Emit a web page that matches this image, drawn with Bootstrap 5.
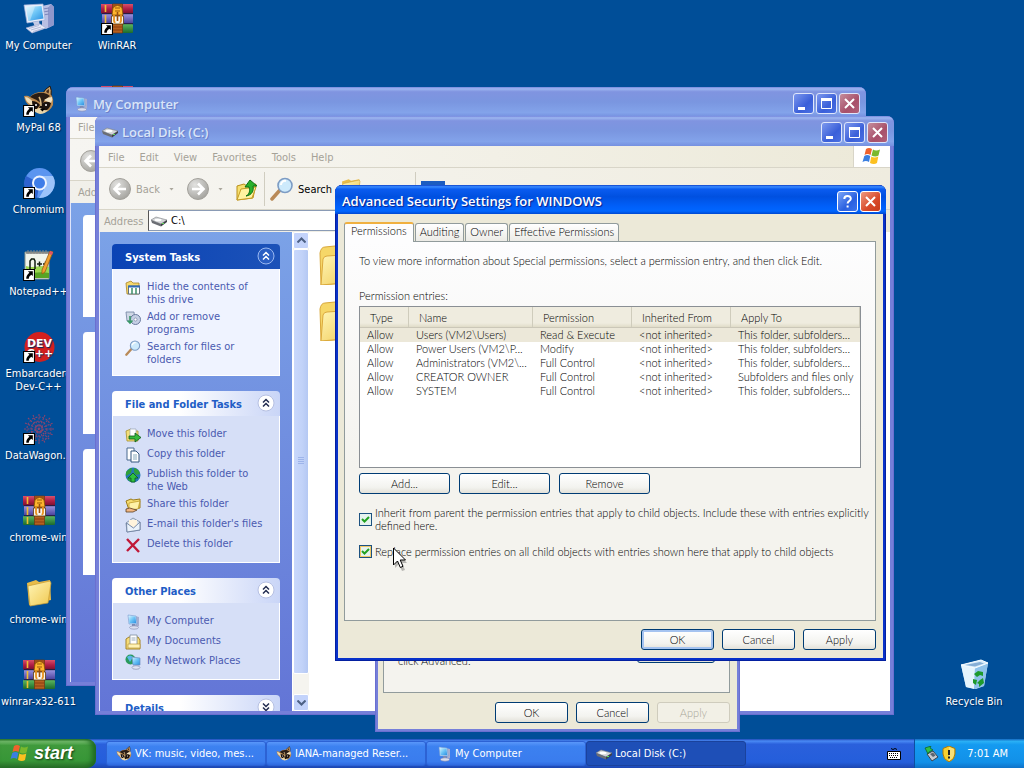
<!DOCTYPE html>
<html lang="en">
<head>
<meta charset="utf-8">
<meta name="viewport" content="width=device-width, initial-scale=1">
<title>Desktop</title>
<link rel="stylesheet" href="https://cdn.jsdelivr.net/npm/bootstrap@5.3.0/dist/css/bootstrap.min.css">
<style>
:root{--shell:"DejaVu Sans Condensed","Noto Sans",sans-serif;--dlg:Lato,"Liberation Sans",Arial,sans-serif;--cap:"Open Sans","Noto Sans",sans-serif}
body{font:11px/13px var(--shell);color:#000;background:#004e98;height:100vh;overflow:hidden}
button,input{font:inherit;color:inherit}
a,a:hover{text-decoration:none;color:inherit}
svg{display:block;flex:none}
.i16{width:16px;height:16px}.i24{width:24px;height:24px}.i32{width:32px;height:32px}

/* desktop */
.desk{display:grid;grid-template-columns:77px 80px 1fr 100px;grid-template-rows:repeat(9,82px);overflow:hidden}
.shortcut,.shortcut:hover{color:#fff;padding-top:3px;text-align:center;text-shadow:1px 1px 1px #002a5c;white-space:nowrap;display:flex;flex-direction:column;align-items:center;gap:4px}
.bin{grid-column:4;grid-row:9}

/* windows */
.win{position:absolute;border-radius:7px 7px 0 0;display:flex;flex-direction:column}
.win-back{background:#757fd9;padding:0 4px 4px;box-shadow:inset 0 0 0 1px #6a6fd0}
.caption{height:30px;font:600 13px/16px var(--cap);color:#d8e4f8;display:flex;align-items:center;margin:0 -4px;padding:3px 6px 0 7px;border-radius:7px 7px 0 0;background:linear-gradient(#7486dd 0,#9db6f0 6%,#8094e0 16%,#7a96e0 50%,#83a3ea 85%,#7590e0 100%);text-shadow:1px 1px 0 #6b7fcb}
.capbtn{width:21px;height:21px;padding:0;border:1px solid #dfe6fb;border-radius:3px;background:linear-gradient(135deg,#7d98ee,#3a5fd9 60%,#4a70e2);color:#fff}
.capbtn.x{background:linear-gradient(135deg,#c58d9c,#a8506a 60%,#b0607a)}
.capgroup{display:flex;gap:2px}
.w1{left:66px;right:158px;top:87px;bottom:53px}
.w2{left:95px;right:130px;top:116px;bottom:24px}
.chrome{background:#f1f0ea;color:#a5a298}
.menubar{height:22px;border-bottom:1px solid #d8d5c8;background:linear-gradient(90deg,#f8f7f4,#ece9d8)}
.toolrow{height:42px;border-bottom:1px solid #d8d5c8;background:linear-gradient(90deg,#f6f5f1,#efecdf);padding:2px 0 0 9px}
.addrrow{height:22px;background:linear-gradient(90deg,#f1f0ea,#ece9d8)}
.addrrow input{border:0;outline:0;background:transparent;width:100%;color:#000;padding:0}
.addrbox{background:#fff;border:1px solid #8a9bb5;border-left-color:#555;height:21px}
.vsep{width:1px;height:34px;margin:0 5px;background:#d0cdc0}
.caret{width:5px;height:3px;background:#aaa79d;clip-path:polygon(0 0,100% 0,50% 100%)}
.flagbox{width:37px;background:#fff;border-left:1px solid #d8d5c8}
.taskpane{width:193px;padding:12px 12px 0;background:linear-gradient(#7ba2e7,#6375d6);border-left:1px solid #dfe5fa;overflow:hidden;display:flex;flex-direction:column;gap:15px;flex:none}
.taskbox{flex:none;color:#4a5ab0}
.taskbox h2{font:bold 11px/13px var(--shell);height:25px;margin:0;padding:3px 5px 0 13px;border-radius:4px 4px 0 0;background:linear-gradient(90deg,#fff 40%,#c9d5f7);color:#215dc6;display:flex;align-items:center;justify-content:space-between}
.taskbox.prime h2{background:linear-gradient(90deg,#0a43b5,#1c52b8);color:#fff}
.taskbox ul{margin:0;padding:11px 12px 9px 12px;border:1px solid #fff;border-top:0;background:#d6dff7;list-style:none;display:flex;flex-direction:column;gap:4px}
.taskbox.prime ul{background:#eff3ff}
.taskbox li{display:flex;gap:6px;min-height:16px}
.chev{width:18px;height:18px;padding:0;border:0;background:none;margin-top:-4px}
.sbar{width:17px;background:#f5f4ef;flex:none;border-left:1px solid #fff}
.sbtn{height:17px;padding:0;border:1px solid #fff;border-radius:2px;background:#c3d3fb;display:flex;align-items:center;justify-content:center}
.thumb{background:linear-gradient(90deg,#c9d8fc,#c1d2f8 60%,#b4c8f3);border:1px solid #fff;border-radius:2px;display:flex;align-items:center;justify-content:center;height:425px}
.ghost{background:linear-gradient(90deg,#fff,#dfe3f6);border-left:1px solid #fff;border-radius:4px 0 0 0;border-bottom:1px solid #fff}

/* dialogs */
.dlg{font:300 11px/13px var(--dlg)}
.face{background:#ece9d8}
.sheet{background:linear-gradient(#fdfdfe,#f4f3ee 60%);border:1px solid #919b9c}
.xbtn{font:300 11px/13px var(--dlg);border:1px solid #003c74;border-radius:3px;background:linear-gradient(#fff,#f3f3ef 70%,#e3e1d9);height:21px;width:73px;padding:0;color:#000}
.xbtn.wide{width:91px}
.xbtn.def{box-shadow:inset 0 0 0 2px #a5c3f0}
.xbtn:disabled{border-color:#cfccbd;color:#a9a798;background:#f2f0e6}
.w3{left:375px;right:284px;top:420px;bottom:7px}
.w3 .face{padding:6px 7px 6px 5px}
.w4{left:335px;right:138px;top:185px;background:#0831c9;padding:0 3px 3px;box-shadow:inset 0 0 0 1px #0420a0}
.w4 .caption{margin:0 -3px;height:29px;padding:3px 5px 0 7px;color:#fff;text-shadow:1px 1px 1px #0a1e8a;background:linear-gradient(#0a3fc8 0,#3a8bff 6%,#0a5cf0 14%,#0050e0 40%,#0060fa 75%,#0066ff 90%,#0048d0)}
.w4 .capbtn{background:linear-gradient(135deg,#7aa5f8,#2a60e0 60%,#3a74ee);border-color:#fff}
.w4 .capbtn.x{background:linear-gradient(135deg,#ee9a80,#d8492a 60%,#c83c1c)}
.w4 .face{padding:8px 7px 8px 6px}
.xtabs{border:0;margin:0;gap:1px;align-items:flex-end}
.xtabs .nav-link{border:1px solid #919b9c;border-bottom:0;border-radius:3px 3px 0 0;padding:1px 4px 3px;margin:0;color:#000;background:linear-gradient(#fff,#ecebe6);line-height:13px;font-weight:300}
.xtabs .nav-link.active{background:#fdfdfe;border-color:#919b9c;border-top:2px solid #f0b040;padding:0 6px 5px;margin-bottom:-1px;position:relative;color:#000}
.w4 .sheet{padding:12px 14px 60px;min-height:380px}
.listbox{border:1px solid #8a8f94;background:#fff;height:162px}
.listbox table{width:100%;table-layout:fixed;border-collapse:separate;border-spacing:0}
.listbox th{font-weight:300;background:linear-gradient(#efecdf 80%,#e0dcc8);border-bottom:1px solid #cbc7b8;height:21px;padding:1px 0 0 10px;box-shadow:inset -1px 0 #cfccbc}
.listbox td{height:14px;line-height:14px;padding:0 0 0 7px;white-space:nowrap;overflow:hidden}
.listbox tr.sel td{background:#ece8d9}
.tick{appearance:none;width:13px;height:13px;margin:0;border:1px solid #1c5180;flex:none;background:#e6f3ee url("data:image/svg+xml,%3Csvg xmlns='http://www.w3.org/2000/svg' viewBox='0 0 11 11'%3E%3Cpath d='M2 5l2.5 2.5L9 3' fill='none' stroke='%2321a121' stroke-width='2'/%3E%3C/svg%3E")}
.tick.hot{box-shadow:inset 0 0 0 1px #f0c868}
.pointer{position:absolute;left:393px;top:547px;width:14px;height:24px}

/* taskbar */
.bar{height:29px;background:linear-gradient(#1f4bb8 0,#4a8af5 7%,#2a60dc 18%,#245edb 80%,#1c46b0);color:#fff;flex:none}
.start{width:96px;border:0;padding:0 0 2px 10px;border-radius:0 9px 9px 0;background:linear-gradient(#2c7a2a 0,#78c070 8%,#3f9a3c 22%,#379637 75%,#2a6f2a);box-shadow:inset -4px 0 5px #1f6a22;font:italic bold 18px/20px "Liberation Sans",sans-serif;color:#fff;text-shadow:1px 1px 2px #143c14}
.task{width:160px;height:25px;border:1px solid #2c62d4;border-radius:3px;background:linear-gradient(#5a97fa,#3c81f0 20%,#3a7cee 85%,#2f6ae0);color:#fff;padding:0 0 0 9px;text-align:left;white-space:nowrap;overflow:hidden}
.task.on{background:#1e4fb7;border-color:#1a429c}
.tray{width:110px;background:linear-gradient(#1568c0 0,#2ab0f5 8%,#149af0 20%,#1290e8 80%,#0f72c8);border-left:1px solid #0d4fa0}
</style>
</head>
<body class="d-flex flex-column">

<svg width="0" height="0" class="position-absolute" aria-hidden="true">
<defs>
<linearGradient id="gScr" x1="0" y1="0" x2="1" y2="1"><stop offset="0" stop-color="#d6f4ff"/><stop offset=".5" stop-color="#6cc4f6"/><stop offset="1" stop-color="#2a8ee0"/></linearGradient>
<linearGradient id="gFol" x1="0" y1="0" x2="1" y2="1"><stop offset="0" stop-color="#fff6b8"/><stop offset="1" stop-color="#f0c850"/></linearGradient>
<radialGradient id="gBall" cx=".35" cy=".3" r=".8"><stop offset="0" stop-color="#e2e2e0"/><stop offset="1" stop-color="#a09f9a"/></radialGradient>
<linearGradient id="gRed" x1="0" y1="0" x2="0" y2="1"><stop offset="0" stop-color="#d8506a"/><stop offset=".5" stop-color="#b02048"/><stop offset="1" stop-color="#7a1030"/></linearGradient>
<linearGradient id="gVio" x1="0" y1="0" x2="0" y2="1"><stop offset="0" stop-color="#9a94e0"/><stop offset="1" stop-color="#4a3f9a"/></linearGradient>
<linearGradient id="gGrn" x1="0" y1="0" x2="0" y2="1"><stop offset="0" stop-color="#5cb860"/><stop offset="1" stop-color="#1c6a2c"/></linearGradient>
<symbol id="arrow" viewBox="0 0 11 11"><path d="M.5.5h10v10H.5z" fill="#fff" stroke="#000"/><path d="M4.500 2h4.500v4.500L7.600 5.200C6 6.300 5.300 7.300 5.300 9H3C2.800 6.700 4 4.900 5.900 3.500z" fill="#000"/></symbol>
<symbol id="pc" viewBox="0 0 32 32"><path d="M19 3l9-2 3 3v18l-8 4-4-2z" fill="#b9bfe4"/><path d="M28 1l3 3v18l-6 3V5z" fill="#8f97cc"/><path d="M20 6l6-1M20 9l6-1M20 12l6-1" stroke="#7d86bb"/><path d="M1 2l19-1 2 16-18 3z" fill="#e9eefb" stroke="#9fb0d8" stroke-width=".7"/><path d="M3 4l15.500-1 2 12.500L5.500 18z" fill="url(#gScr)"/><path d="M3 4l9-.6L7 17.700l-1.500.3z" fill="#fff" opacity=".35"/><path d="M10 19l6-1 1 5-5 1z" fill="#c3cae6"/><path d="M3 25l14-4 6 4-14 5z" fill="#e8ebf8" stroke="#a7afd4" stroke-width=".7"/><path d="M6 25.500l10-3M8 27l10-3M10 28.500l10-3" stroke="#b5bcdc"/></symbol>
<symbol id="pcs" viewBox="0 0 16 16"><path d="M10 2l4 1v9l-3 2z" fill="#a7adcf"/><path d="M3 1l8 1 1 8-8 0z" fill="#cfe0f8" stroke="#6f9cd0" stroke-width=".6"/><path d="M3.700 1.700l6.800.8.700 6.800-6.700-.1z" fill="url(#gScr)"/><path d="M7 10h3l1 3H7z" fill="#7d8bb4"/><ellipse cx="9" cy="13.500" rx="4.500" ry="1.700" fill="#d9def0" stroke="#8088ac" stroke-width=".6"/></symbol>
<symbol id="rar" viewBox="0 0 32 32"><rect x="0" y="1" width="32" height="9.500" fill="url(#gRed)"/><rect x="1" y="11" width="31" height="9.500" fill="url(#gVio)"/><rect x="0" y="21" width="32" height="9" rx="1" fill="url(#gGrn)"/><path d="M4.500 2v7M4.500 12v8M4.500 22v7" stroke="#f0c030" stroke-width="1.600"/><path d="M1 10.700h31M1 20.700h31" stroke="#2a1838"/><path d="M11.500 1h10v29h-10z" fill="#b5601f" stroke="#6a3410" stroke-width=".7"/><path d="M12 24h9M12 27h9M12 3h9" stroke="#8c3f12"/><path d="M12 5q4.500-5 9 0l1 7h-11z" fill="#ffb52e" stroke="#8a5408" stroke-width=".8"/><path d="M14 5h5M14 8h5" stroke="#9a5a08" stroke-width="1.200"/><path d="M10.500 13h12v8h-12z" fill="#f8f4ec" stroke="#5c3c10" stroke-width=".8"/><path d="M13 12v6q0 1.500 1.500 1.500M20 12v6q0 1.500-1.500 1.500" fill="none" stroke="#e8921c" stroke-width="1.800"/><path d="M16.500 9v9" stroke="#9a4e10" stroke-width="1.600"/></symbol>
<symbol id="coon" viewBox="0 0 32 32"><path d="M20 8q2-4 7-7 2 4 1 10z" fill="#c8a068" stroke="#20140c"/><path d="M23 7q1-2 3-3 0 3-.5 5z" fill="#4a2c1c"/><path d="M1 11q4-1 6 1 4-5 12-5 7 0 10 4 2 4 1 9-3 7-11 8-9 0-12-7-5-3-6-10z" fill="#bb8a50"/><path d="M7 12q6-5 14-4 4 1 6 3-5 3-8 8-6-5-12-7z" fill="#2a1d15"/><path d="M2 12q3 0 5 2l7 6-2 4q-3-1-5-5-4-2-5-7z" fill="#eddcb8"/><path d="M9 16q5 0 8 4l-4 5q-4-3-4-9z" fill="#1c130e"/><path d="M21 15q4-3 8-3 1 3-1 6-4-1-7-3z" fill="#f2e4c4"/><path d="M18 19q5-4 10-1-1 6-6 8-4 0-6-3z" fill="#1c130e"/><path d="M14 24q3-2 5 0 3 2 6 1-3 4-8 4-5-1-7-5z" fill="#e8d4a8"/><path d="M16 12q2 3 2 9" stroke="#d8b880" stroke-width="1.600" fill="none"/><circle cx="13" cy="20" r="1" fill="#fff"/><circle cx="23" cy="20" r="1" fill="#fff"/><path d="M17 24l5-.5-2.500 3z" fill="#000"/></symbol>
<symbol id="crm" viewBox="0 0 32 32"><circle cx="16.500" cy="16" r="15" fill="#5b95f0"/><path d="M16.500 16L3 9A15 15 0 0 0 14 31z" fill="#2d62cf"/><path d="M16.500 9H30A15 15 0 0 1 16 31l7-12z" fill="#9cc3fa"/><circle cx="16.500" cy="16" r="7.500" fill="#eef4ff"/><circle cx="16.500" cy="16" r="5.500" fill="#3f7de8"/></symbol>
<symbol id="npp" viewBox="0 0 32 32"><path d="M2 3h24v27H2z" fill="#f0f4ec" stroke="#8a9488"/><path d="M3 17c8 3 15-2 23 1v11H3z" fill="#9cd850"/><path d="M3 23c8 2 15-1 23 1v5H3z" fill="#58a424"/><path d="M3 4h23" stroke="#555"/><path d="M5 1v4M8 1v4M11 1v4M14 1v4M17 1v4M20 1v4M23 1v4" stroke="#888"/><path d="M7 20v-8l1.500-2H11l1 2v8M14 15h5M16.500 12.500v5M20 15h5M22.500 12.500v5" fill="none" stroke="#101c10" stroke-width="1.500"/><path d="M27 2l3 1-8 20-3 2v-4z" fill="#f0a030" stroke="#9a5c10" stroke-width=".8"/><path d="M27 2l3 1-1 3-3-1z" fill="#e0566a"/></symbol>
<symbol id="dev" viewBox="0 0 32 32"><circle cx="16.500" cy="16" r="15" fill="#d2201e"/><text x="16.500" y="16" font-family="DejaVu Sans" font-weight="700" font-size="11" fill="#fff" text-anchor="middle">DEV</text><text x="17" y="26" font-family="DejaVu Sans" font-weight="700" font-size="11" fill="#fff" text-anchor="middle">C++</text></symbol>
<symbol id="dw" viewBox="0 0 32 32"><g fill="none" stroke="#a04468" stroke-width="1.100" stroke-dasharray="2 1.500" opacity=".85"><circle cx="16" cy="16" r="4"/><circle cx="16" cy="16" r="8"/><circle cx="16" cy="16" r="12"/><path d="M16 1v30M1 16h30M5 5l22 22M27 5L5 27M10 2l12 28M22 2L10 30M2 10l28 12M2 22l28-12"/></g></symbol>
<symbol id="fold" viewBox="0 0 32 32"><path d="M4 6l9-3 3 2 11-2 1 20-22 5z" fill="#e8bc48"/><path d="M5 9l22-5 1 2-3 20L7 29z" fill="url(#gFol)" stroke="#c99c34" stroke-width=".7"/></symbol>
<symbol id="bigfold" viewBox="0 0 46 40"><path d="M2 8q1-6 5-6l10-1q4 0 5 4l16 0q5 0 5 5l-4 27-36 3z" fill="#f6d768" stroke="#d9a83a"/><path d="M5 14q1-3 4-3l30-2q3 0 3 4l-5 24-34 3z" fill="url(#gFol)" stroke="#dba93c"/></symbol>
<symbol id="bin" viewBox="0 0 32 32"><path d="M3 6l20-5 7 3-4 23-8 3-10-2z" fill="#b8daf4"/><path d="M3 6l14 3-1 21-8-2z" fill="#e5f4fd"/><path d="M17 9l13-5-4 23-10 3z" fill="#8fc2ea"/><path d="M3 6l20-5 7 3-13 5z" fill="#d7ecfa" stroke="#f5fbff"/><path d="M7 6l15-3 4 1.500-9 3z" fill="#86aed6"/><path d="M16 15l4-3 5 1v4l-3-1-3 2zM25 19l1 5-5 4v-3l-2-1 3-3zM15 20l4 1-1 5-3-2z" fill="#1e9a2c"/></symbol>
<symbol id="disk" viewBox="0 0 16 16"><path d="M0 7l5-3 11 3-6 4z" fill="#d4d6d8" stroke="#7c7f84" stroke-width=".6"/><path d="M0 7l10 4v2.500L1 10z" fill="#6b6e74"/><path d="M10 11l6-4v2l-6 4.500z" fill="#3f4248"/><ellipse cx="7" cy="7" rx="3.500" ry="1.300" fill="#fff"/><rect x="11" y="10" width="2" height="1" fill="#5fe05a"/></symbol>
<symbol id="mag" viewBox="0 0 24 24"><path d="M10 13L2 22" stroke="#b98a58" stroke-width="3.500" stroke-linecap="round"/><circle cx="15" cy="8.500" r="7" fill="#cdeafc" stroke="#7d9cc4" stroke-width="1.600"/><path d="M11 8a4 4 0 0 1 5-4" stroke="#fff" stroke-width="2" fill="none"/></symbol>
<symbol id="upf" viewBox="0 0 24 24"><path d="M2 9l7-2 3 2 9-2-3 14-16 2z" fill="#f7e070" stroke="#b98f18"/><path d="M6 12l15-2-4 11-15 2z" fill="#fff3a0" stroke="#c69c24"/><path d="M11 19c4-2 4-6 3-9h-4l5-7 7 6h-4c1 5-1 9-7 10z" fill="#2bb02c" stroke="#0d6e14"/></symbol>
<symbol id="flag" viewBox="0 0 20 20"><path d="M4 3q3-2 6 0L8.500 9q-3-2-6 0z" fill="#f0622c"/><path d="M11 3.500q3 2 7 0L16.500 9.500q-3 2-7 0z" fill="#7ab82c"/><path d="M2.300 10q3-2 6 0L7 16q-3-2-6.500 0z" fill="#3a7fe0"/><path d="M9.300 10.500q3 2 7 0L15 17q-3 2-7 0z" fill="#fcc020"/></symbol>
<symbol id="tHide" viewBox="0 0 16 16"><path d="M1 3l5-2 2 2h6v11H2z" fill="#f4d86c" stroke="#a8842a" stroke-width=".8"/><path d="M3.500 6h11v8h-11z" fill="#fff" stroke="#62727e"/><path d="M3 6.500h12" stroke="#2f6bb8" stroke-width="2"/><path d="M7 8v6M11 8v6" stroke="#3d8e68" stroke-width="1.500"/></symbol>
<symbol id="tAdd" viewBox="0 0 16 16"><path d="M1 2h8l1 9H2z" fill="#cfd7e6" stroke="#7080a0" stroke-width=".8"/><circle cx="10.500" cy="9.500" r="5" fill="#c5cfe4" stroke="#6a7a9e"/><circle cx="10.500" cy="9.500" r="1.500" fill="#fff" stroke="#6a7a9e" stroke-width=".6"/><path d="M5 6v7M2.500 10.500L5 13l2.500-2.500" fill="none" stroke="#3a9868" stroke-width="1.600"/></symbol>
<symbol id="tMove" viewBox="0 0 16 16"><path d="M1 4l5-2 2 2h5v10H2z" fill="#f2df7a" stroke="#a8902c" stroke-width=".8"/><path d="M5 2h6v8H5z" fill="#fff" stroke="#8a98a8" stroke-width=".6"/><path d="M4 9h6V6l6 4.500L10 15v-3H4z" fill="#36b83c" stroke="#0e5c18" stroke-width=".8"/></symbol>
<symbol id="tCopy" viewBox="0 0 16 16"><path d="M2 1h7v12H2z" fill="#fff" stroke="#48688e"/><path d="M6 4h5l3 3v8H6z" fill="#fff" stroke="#35567e"/><path d="M8 8h4M8 10h4M8 12h4" stroke="#8ab"/></symbol>
<symbol id="tWeb" viewBox="0 0 16 16"><circle cx="8" cy="8" r="7.500" fill="#2478b4"/><path d="M1 5q4-4 6-4l-1 5-5 3zM9 1q5 1 6 6l-4 1-2-3zM2 11h4l1 4q-4-1-5-4z" fill="#2fa03a"/><path d="M8 6l5 5h-3v4H6v-4H3z" fill="#30c040" stroke="#0b5c1c" stroke-width=".8"/></symbol>
<symbol id="tShare" viewBox="0 0 16 16"><path d="M1 4l5-2 2 1 7-1v9l-11 2z" fill="#f6dc70" stroke="#9c7c1c"/><path d="M4 6l11-2-2 8-9 1z" fill="#fff2a8" stroke="#b8921c" stroke-width=".7"/><path d="M1 12q4-2 7 0l4 1-4 2H1z" fill="#f2b884" stroke="#5c3c20" stroke-width=".8"/></symbol>
<symbol id="tMail" viewBox="0 0 16 16"><path d="M1 6l7-5 7 4v8L2 15z" fill="#dbe6f2" stroke="#76869c" stroke-width=".8"/><path d="M4 3h8v7H4z" fill="#fff3dc"/><path d="M1.500 6l7 5 6.500-6v8L2 15z" fill="#eaf2fb" stroke="#6d80a0" stroke-width=".9"/></symbol>
<symbol id="tDel" viewBox="0 0 16 16"><path d="M2 2l12 13M14 2L2 14" stroke="#c01838" stroke-width="2.400"/></symbol>
<symbol id="tDocs" viewBox="0 0 16 16"><path d="M1 5l3-2h9l2 3v9H1z" fill="#f6dc78" stroke="#a58428"/><path d="M5 1h7v10H5z" fill="#fff" stroke="#7f8ea0" stroke-width=".8"/><path d="M6.500 4h4M6.500 6h4" stroke="#9ab"/><path d="M3 10h12v4H3z" fill="#fff2b4" stroke="#b8983c" stroke-width=".7"/></symbol>
<symbol id="tNet" viewBox="0 0 16 16"><circle cx="5.500" cy="5.500" r="5" fill="#2a9a5c"/><path d="M2 3q3-3 6 0l-3 5z" fill="#58b8e8"/><path d="M7 3l8 1v7l-7 0z" fill="url(#gScr)" stroke="#6f8cc0" stroke-width=".7"/><ellipse cx="11" cy="13.500" rx="4" ry="1.800" fill="#dfe4f4" stroke="#8890b0" stroke-width=".7"/></symbol>
<symbol id="up2" viewBox="0 0 18 18"><circle cx="9" cy="9" r="8" fill="#fff" stroke="#b6c0e2"/><path d="M6 8.500l3-3 3 3M6 12.500l3-3 3 3" fill="none" stroke="#222c50" stroke-width="1.500"/></symbol>
<symbol id="dn2" viewBox="0 0 18 18"><circle cx="9" cy="9" r="8" fill="#fff" stroke="#b6c0e2"/><path d="M6 5.500l3 3 3-3M6 9.500l3 3 3-3" fill="none" stroke="#222c50" stroke-width="1.500"/></symbol>
<symbol id="up2w" viewBox="0 0 18 18"><circle cx="9" cy="9" r="8" fill="#2a5fc4" stroke="#9ab8f0"/><path d="M6 8.500l3-3 3 3M6 12.500l3-3 3 3" fill="none" stroke="#fff" stroke-width="1.500"/></symbol>
<symbol id="bMin" viewBox="0 0 19 19"><path d="M4 13h7v3H4z" fill="#fff"/></symbol>
<symbol id="bMax" viewBox="0 0 19 19"><path d="M4.500 5.500h10v9h-10z" fill="none" stroke="#fff"/><path d="M4 4h11v3H4z" fill="#fff"/></symbol>
<symbol id="bX" viewBox="0 0 19 19"><path d="M5 5l9 9M14 5l-9 9" stroke="#fff" stroke-width="2"/></symbol>
<symbol id="bQ" viewBox="0 0 19 19"><path d="M6.300 7c0-4 6.500-4 6.500-.3 0 2.300-3.200 2.300-3.200 4.800M9.600 13.500v2" fill="none" stroke="#fff" stroke-width="2"/></symbol>
<symbol id="ballL" viewBox="0 0 24 24"><circle cx="12" cy="12" r="10.500" fill="url(#gBall)" stroke="#a3a19b"/><path d="M12 6.500L6.500 12l5.500 5.500M7 12h11" fill="none" stroke="#fff" stroke-width="2.600"/></symbol>
<symbol id="ballR" viewBox="0 0 24 24"><circle cx="12" cy="12" r="10.500" fill="url(#gBall)" stroke="#a3a19b"/><path d="M12 6.500l5.500 5.500-5.500 5.500M17 12H6" fill="none" stroke="#fff" stroke-width="2.600"/></symbol>
</defs>
</svg>

<main class="flex-grow-1 position-relative overflow-hidden">
  <div class="desk">
    <a href="#" class="shortcut"><svg class="i32"><use href="#pc"/></svg>My Computer</a>
    <a href="#" class="shortcut"><svg class="i32"><use href="#rar"/><use href="#arrow" y="20" width="12" height="12"/></svg>WinRAR</a>
    <a href="#" class="shortcut" style="grid-area:2/1"><svg class="i32"><use href="#coon"/><use href="#arrow" y="20" width="12" height="12"/></svg>MyPal 68</a>
    <a href="#" class="shortcut" style="grid-area:2/2" aria-label="Archive"><svg class="i32"><use href="#rar"/></svg></a>
    <a href="#" class="shortcut" style="grid-area:3/1"><svg class="i32"><use href="#crm"/><use href="#arrow" y="20" width="12" height="12"/></svg>Chromium</a>
    <a href="#" class="shortcut" style="grid-area:4/1"><svg class="i32"><use href="#npp"/><use href="#arrow" y="20" width="12" height="12"/></svg>Notepad++</a>
    <a href="#" class="shortcut" style="grid-area:5/1"><svg class="i32"><use href="#dev"/><use href="#arrow" y="20" width="12" height="12"/></svg><span>Embarcadero<br>Dev-C++</span></a>
    <a href="#" class="shortcut" style="grid-area:6/1"><svg class="i32"><use href="#dw"/><use href="#arrow" y="20" width="12" height="12"/></svg>DataWagon...</a>
    <a href="#" class="shortcut" style="grid-area:7/1"><svg class="i32"><use href="#rar"/></svg>chrome-win</a>
    <a href="#" class="shortcut" style="grid-area:8/1"><svg class="i32"><use href="#fold"/></svg>chrome-win</a>
    <a href="#" class="shortcut" style="grid-area:9/1"><svg class="i32"><use href="#rar"/></svg>winrar-x32-611</a>
    <a href="#" class="shortcut bin"><svg class="i32"><use href="#bin"/></svg>Recycle Bin</a>
  </div>

  <!-- My Computer window, mostly covered -->
  <section class="win win-back w1">
    <header class="caption"><svg class="i16 me-1"><use href="#pcs"/></svg><span class="flex-grow-1">My Computer</span>
      <span class="capgroup"><button class="capbtn" aria-label="Minimize"><svg width="19" height="19"><use href="#bMin"/></svg></button><button class="capbtn" aria-label="Maximize"><svg width="19" height="19"><use href="#bMax"/></svg></button><button class="capbtn x" aria-label="Close"><svg width="19" height="19"><use href="#bX"/></svg></button></span></header>
    <div class="chrome">
      <div class="menubar d-flex align-items-center ps-2"><a href="#">File</a></div>
      <div class="toolrow d-flex align-items-center"><svg class="i24"><use href="#ballL"/></svg></div>
      <div class="addrrow d-flex align-items-center ps-1"><span class="ps-1">Address</span></div>
    </div>
    <div class="taskpane flex-grow-1 pe-0">
      <div class="ghost flex-shrink-0" style="height:102px"></div>
      <div class="ghost flex-shrink-0" style="height:102px"></div>
      <div class="ghost flex-shrink-0" style="height:126px"></div>
    </div>
  </section>

  <!-- Local Disk window -->
  <section class="win win-back w2">
    <header class="caption"><svg class="i16 me-1"><use href="#disk"/></svg><span class="flex-grow-1">Local Disk (C:)</span>
      <span class="capgroup"><button class="capbtn" aria-label="Minimize"><svg width="19" height="19"><use href="#bMin"/></svg></button><button class="capbtn" aria-label="Maximize"><svg width="19" height="19"><use href="#bMax"/></svg></button><button class="capbtn x" aria-label="Close"><svg width="19" height="19"><use href="#bX"/></svg></button></span></header>
    <div class="chrome">
      <div class="menubar d-flex">
        <nav class="d-flex align-items-center flex-grow-1" style="gap:15px;padding:2px 0 0 9px"><a href="#">File</a><a href="#">Edit</a><a href="#">View</a><a href="#">Favorites</a><a href="#">Tools</a><a href="#">Help</a></nav>
        <div class="flagbox d-flex align-items-center justify-content-center"><svg width="20" height="20"><use href="#flag"/></svg></div>
      </div>
      <div class="toolrow d-flex align-items-center">
        <svg class="i24"><use href="#ballL"/></svg><span class="ms-1" style="width:29px">Back</span><i class="caret ms-1 me-2"></i>
        <svg class="i24 ms-1"><use href="#ballR"/></svg><i class="caret ms-2 me-2"></i>
        <svg class="i24 ms-1"><use href="#upf"/></svg><i class="vsep"></i>
        <svg class="i24"><use href="#mag"/></svg><span class="text-black ms-1" style="width:41px">Search</span>
        <svg class="i24"><use href="#fold"/></svg><span class="text-black ms-1" style="width:43px">Folders</span><i class="vsep"></i>
        <svg class="i24"><path d="M.500 4.500h23v16H.500z" fill="#fff" stroke="#1c4fa8"/><path d="M0 4h24v4H0z" fill="#1c5cc0"/></svg>
      </div>
      <div class="addrrow d-flex align-items-center">
        <label for="addr" style="width:49px;padding:1px 0 0 5px">Address</label>
        <div class="addrbox d-flex align-items-center flex-grow-1 me-5" style="padding-left:2px"><svg class="i16 me-1"><use href="#disk"/></svg><input id="addr" value="C:\"></div>
      </div>
    </div>
    <div class="d-flex flex-grow-1 bg-white" style="min-height:0">
      <aside class="taskpane">
        <div class="taskbox prime"><h2>System Tasks<button class="chev" aria-label="Collapse"><svg width="18" height="18"><use href="#up2w"/></svg></button></h2>
          <ul><li><svg class="i16"><use href="#tHide"/></svg><a href="#">Hide the contents of<br>this drive</a></li>
          <li><svg class="i16"><use href="#tAdd"/></svg><a href="#">Add or remove<br>programs</a></li>
          <li><svg class="i16"><use href="#mag"/></svg><a href="#">Search for files or<br>folders</a></li></ul></div>
        <div class="taskbox"><h2>File and Folder Tasks<button class="chev" aria-label="Collapse"><svg width="18" height="18"><use href="#up2"/></svg></button></h2>
          <ul><li><svg class="i16"><use href="#tMove"/></svg><a href="#">Move this folder</a></li>
          <li><svg class="i16"><use href="#tCopy"/></svg><a href="#">Copy this folder</a></li>
          <li><svg class="i16"><use href="#tWeb"/></svg><a href="#">Publish this folder to<br>the Web</a></li>
          <li><svg class="i16"><use href="#tShare"/></svg><a href="#">Share this folder</a></li>
          <li><svg class="i16"><use href="#tMail"/></svg><a href="#" class="text-nowrap">E-mail this folder's files</a></li>
          <li><svg class="i16"><use href="#tDel"/></svg><a href="#">Delete this folder</a></li></ul></div>
        <div class="taskbox"><h2>Other Places<button class="chev" aria-label="Collapse"><svg width="18" height="18"><use href="#up2"/></svg></button></h2>
          <ul><li><svg class="i16"><use href="#pcs"/></svg><a href="#">My Computer</a></li>
          <li><svg class="i16"><use href="#tDocs"/></svg><a href="#">My Documents</a></li>
          <li><svg class="i16"><use href="#tNet"/></svg><a href="#">My Network Places</a></li></ul></div>
        <div class="taskbox"><h2>Details<button class="chev" aria-label="Expand"><svg width="18" height="18"><use href="#dn2"/></svg></button></h2></div>
      </aside>
      <div class="sbar d-flex flex-column">
        <button class="sbtn" aria-label="Scroll up"><svg width="9" height="6"><path d="M.500 5.500l4-4 4 4" fill="none" stroke="#4d6185" stroke-width="2"/></svg></button>
        <div class="thumb"><svg width="7" height="8"><path d="M0 .500h6M0 2.500h6M0 4.500h6M0 6.500h6" stroke="#9db4ea"/></svg></div>
        <button class="sbtn mt-auto" aria-label="Scroll down"><svg width="9" height="6"><path d="M.500.500l4 4 4-4" fill="none" stroke="#4d6185" stroke-width="2"/></svg></button>
      </div>
      <div class="d-flex flex-column" style="gap:16px;padding:13px 0 0 9px"><svg width="46" height="40"><use href="#bigfold"/></svg><svg width="46" height="40"><use href="#bigfold"/></svg></div>
    </div>
  </section>

  <!-- Properties dialog behind -->
  <section class="win win-back dlg w3" style="padding:0 3px 3px">
    <div class="face flex-grow-1 d-flex flex-column">
      <div class="sheet flex-grow-1 d-flex align-items-end" style="padding:0 14px 25px">
        <div class="d-flex align-items-start justify-content-between w-100"><span style="padding-top:12px">click Advanced.</span><button class="xbtn" style="width:78px">Advanced</button></div>
      </div>
      <div class="d-flex justify-content-end" style="gap:8px;padding-top:9px"><button class="xbtn">OK</button><button class="xbtn">Cancel</button><button class="xbtn" disabled>Apply</button></div>
    </div>
  </section>

  <!-- Advanced Security Settings dialog -->
  <section class="win dlg w4" role="dialog" aria-labelledby="dlgTitle">
    <header class="caption"><span id="dlgTitle" class="flex-grow-1">Advanced Security Settings for WINDOWS</span>
      <span class="capgroup"><button class="capbtn" aria-label="Help"><svg width="19" height="19"><use href="#bQ"/></svg></button><button class="capbtn x" aria-label="Close"><svg width="19" height="19"><use href="#bX"/></svg></button></span></header>
    <div class="face">
      <ul class="nav nav-tabs xtabs"><li class="nav-item"><a class="nav-link active" href="#">Permissions</a></li><li class="nav-item"><a class="nav-link" href="#">Auditing</a></li><li class="nav-item"><a class="nav-link" href="#">Owner</a></li><li class="nav-item"><a class="nav-link" href="#">Effective Permissions</a></li></ul>
      <div class="sheet">
        <p class="mb-0">To view more information about Special permissions, select a permission entry, and then click Edit.</p>
        <p style="margin:22px 0 4px">Permission entries:</p>
        <div class="listbox">
          <table>
            <colgroup><col style="width:49px"><col style="width:124px"><col style="width:99px"><col style="width:99px"><col></colgroup>
            <thead><tr><th>Type</th><th>Name</th><th>Permission</th><th>Inherited From</th><th>Apply To</th></tr></thead>
            <tbody>
              <tr class="sel"><td>Allow</td><td>Users (VM2\Users)</td><td>Read &amp; Execute</td><td>&lt;not inherited&gt;</td><td>This folder, subfolders...</td></tr>
              <tr><td>Allow</td><td>Power Users (VM2\P...</td><td>Modify</td><td>&lt;not inherited&gt;</td><td>This folder, subfolders...</td></tr>
              <tr><td>Allow</td><td>Administrators (VM2\...</td><td>Full Control</td><td>&lt;not inherited&gt;</td><td>This folder, subfolders...</td></tr>
              <tr><td>Allow</td><td>CREATOR OWNER</td><td>Full Control</td><td>&lt;not inherited&gt;</td><td>Subfolders and files only</td></tr>
              <tr><td>Allow</td><td>SYSTEM</td><td>Full Control</td><td>&lt;not inherited&gt;</td><td>This folder, subfolders...</td></tr>
            </tbody>
          </table>
        </div>
        <div class="d-flex" style="gap:9px;padding-top:5px"><button class="xbtn wide">Add...</button><button class="xbtn wide">Edit...</button><button class="xbtn wide">Remove</button></div>
        <div class="d-flex align-items-center" style="gap:3px;margin-top:12px"><input type="checkbox" class="tick" id="inh" checked><label for="inh" class="text-nowrap">Inherit from parent the permission entries that apply to child objects. Include these with entries explicitly<br>defined here.</label></div>
        <div class="d-flex align-items-center" style="gap:3px;margin-top:13px"><input type="checkbox" class="tick hot" id="rep" checked><label for="rep" class="text-nowrap">Replace permission entries on all child objects with entries shown here that apply to child objects</label></div>
      </div>
      <div class="d-flex justify-content-end" style="gap:8px;padding-top:8px"><button class="xbtn def">OK</button><button class="xbtn">Cancel</button><button class="xbtn">Apply</button></div>
    </div>
  </section>
  <svg class="pointer" viewBox="0 0 14 24"><path d="M2 3v18l4-4 3 7 3-1-3-7h5z" fill="#000" opacity=".25"/><path d="M.500 1v17l4-4 2.800 6.500 2.700-1.200L7.200 13H12.500z" fill="#fff" stroke="#000"/></svg>
</main>

<footer class="bar d-flex">
  <button class="start d-flex align-items-center"><svg width="20" height="20" class="me-1"><use href="#flag"/></svg>start</button>
  <nav class="d-flex align-items-center flex-grow-1" style="padding-left:10px">
    <button class="task d-flex align-items-center"><svg class="i16" style="margin-right:3px"><use href="#coon"/></svg>VK: music, video, mes...</button>
    <button class="task d-flex align-items-center"><svg class="i16" style="margin-right:3px"><use href="#coon"/></svg>IANA-managed Reser...</button>
    <button class="task d-flex align-items-center"><svg class="i16" style="margin-right:3px"><use href="#pcs"/></svg>My Computer</button>
    <button class="task on d-flex align-items-center"><svg class="i16" style="margin-right:3px"><use href="#disk"/></svg>Local Disk (C:)</button>
  </nav>
  <svg width="14" height="12" class="align-self-center" style="margin-right:13px"><path d="M.500 3.500h13v8H.500z" fill="#fff" stroke="#000"/><path d="M2 5.500h10M2 7.500h10M3 9.500h8" stroke="#000" stroke-dasharray="1 1"/><path d="M4 .500l2 1 2-1 2 1" stroke="#000" fill="none"/></svg>
  <div class="tray d-flex align-items-center" style="padding-left:8px">
    <svg class="i16"><path d="M4 8l6-3 5 6-6 4z" fill="#c6cbd2" stroke="#3c444e"/><path d="M7 8l3-1.500 2.500 3L10 11z" fill="#5a6470"/><path d="M2 2l6-2-1 2 3 2-4 2-1 2z" fill="#30c048" stroke="#0c5c20" stroke-width=".7"/></svg>
    <svg class="i16" style="margin-left:2px"><path d="M8 0l6 2.500V8q0 5-6 8-6-3-6-8V2.500z" fill="#f8d030" stroke="#a8780c"/><path d="M8 1l5 2v5q0 4-5 7z" fill="#fff" opacity=".35"/><path d="M8 4v5M8 10.500v2" stroke="#222" stroke-width="2"/></svg>
    <time class="ms-auto" style="padding-right:16px">7:01 AM</time>
  </div>
</footer>
<script src="https://cdn.jsdelivr.net/npm/bootstrap@5.3.0/dist/js/bootstrap.bundle.min.js"></script>
</body>
</html>
